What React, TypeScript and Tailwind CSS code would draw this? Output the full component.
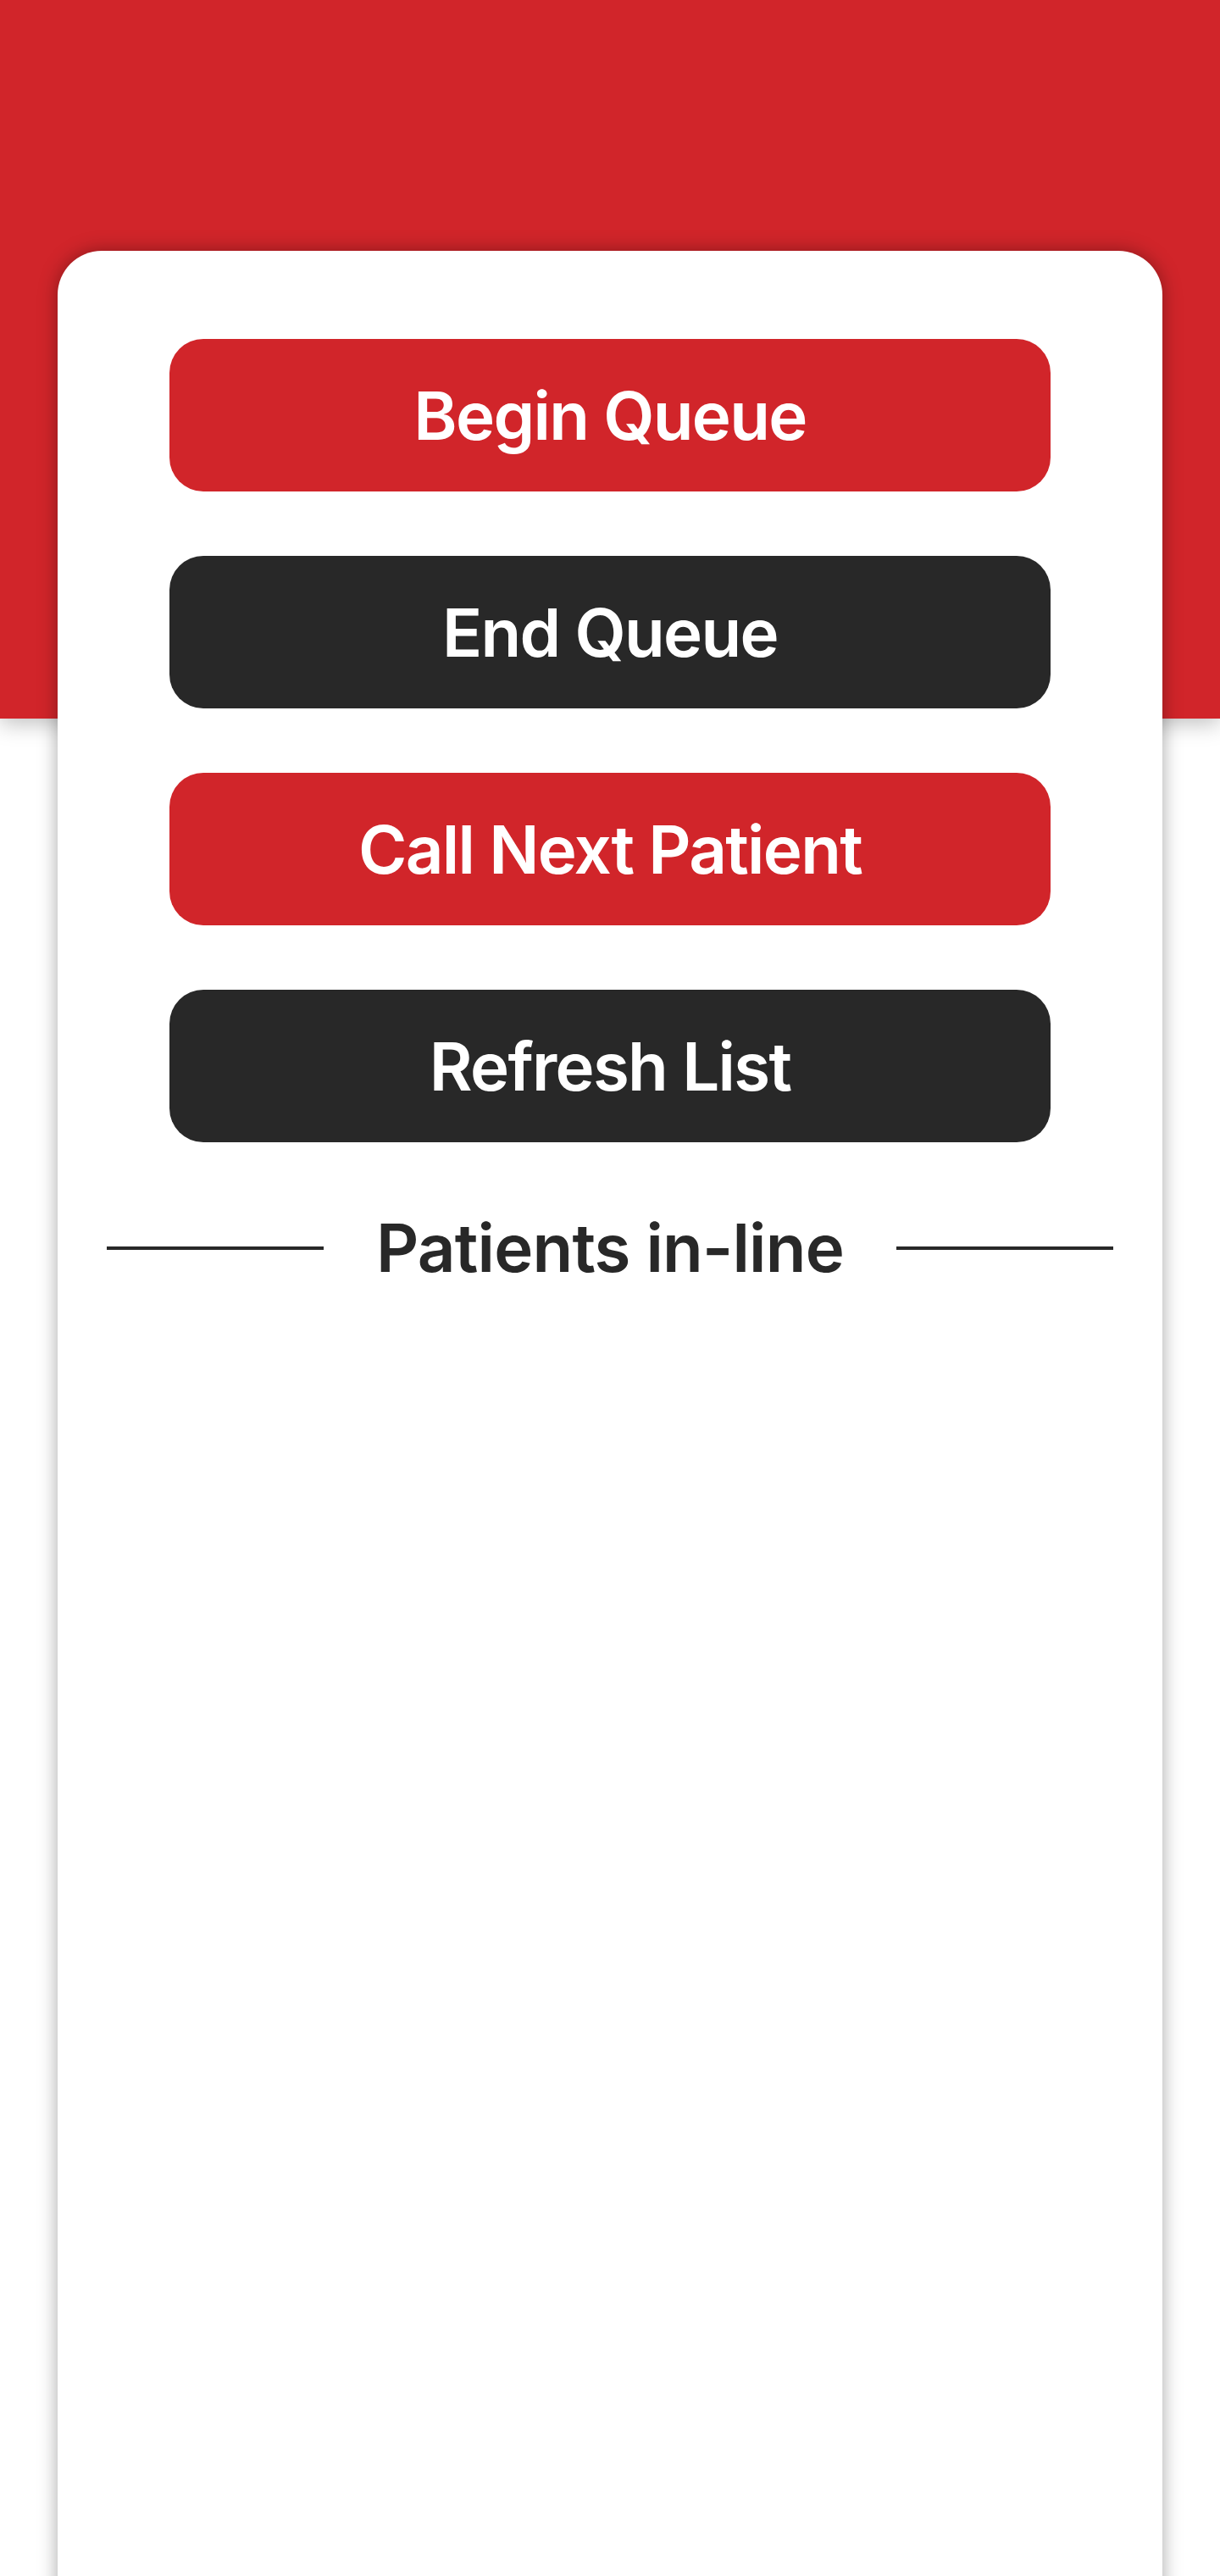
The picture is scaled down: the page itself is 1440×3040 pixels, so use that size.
import React from "react";

const btnBase =
  "flex h-[180px] w-full items-center justify-center rounded-[40px] text-[78px] font-semibold text-white tracking-[-1.7px]";

export default function App() {
  return (
    <div
      className="min-h-[3040px] w-full overflow-hidden bg-white"
      style={{ fontFamily: "Inter, 'Noto Sans', sans-serif" }}
    >
      <div className="h-[848px] w-full bg-[#d1252a] shadow-[0_6px_24px_rgba(0,0,0,0.25)]" />
      <div className="relative z-10 mx-[68px] -mt-[552px] h-[2800px] rounded-t-[52px] bg-white px-[132px] pt-[104px] shadow-[0_0_22px_rgba(0,0,0,0.35)]">
        <div className="flex flex-col gap-[76px]">
          <button className={`${btnBase} bg-[#d1252a]`}>Begin Queue</button>
          <button className={`${btnBase} bg-[#282828]`}>End Queue</button>
          <button className={`${btnBase} bg-[#d1252a]`}>Call Next Patient</button>
          <button className={`${btnBase} bg-[#282828]`}>Refresh List</button>
        </div>
        <div className="-mx-[74px] mt-[78px] flex items-center">
          <div className="h-[4px] w-[256px] shrink-0 bg-[#282828]" />
          <div className="flex-1 text-center text-[78px] font-semibold leading-[1.2] tracking-[-0.8px] text-[#282828]">
            Patients in-line
          </div>
          <div className="h-[4px] w-[256px] shrink-0 bg-[#282828]" />
        </div>
      </div>
    </div>
  );
}
